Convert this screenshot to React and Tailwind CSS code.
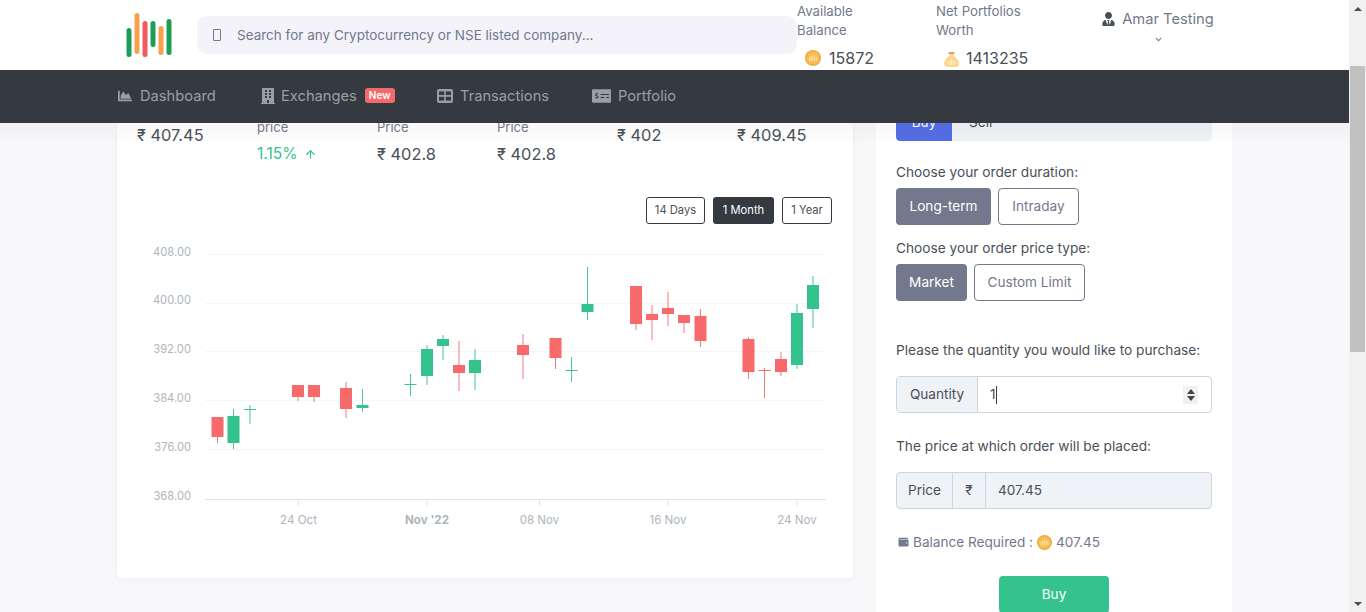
import React from "react";
import { FaChartArea, FaBuilding, FaMoneyCheckAlt, FaUserTie, FaWallet, FaChevronDown } from "react-icons/fa";
import { ArrowUp } from "lucide-react";

function Coin({ s = 16 }) {
  return (
    <svg width={s} height={s} viewBox="0 0 16 16" className="shrink-0">
      <circle cx="8" cy="8" r="8" fill="#f0a93c" />
      <circle cx="8" cy="8" r="6.6" fill="#f6bd55" />
      <path d="M4.5 7v4M6.2 6v5M8 4.5V11M9.8 5.5V11M11.5 7v4" stroke="#fde3a8" strokeWidth="1" />
    </svg>
  );
}
function Bag() {
  return (
    <svg width="15" height="17" viewBox="0 0 15 17" className="shrink-0">
      <path d="M5 3 L10 3 L9.5 5.5 C12.5 8 15 11 15 13.5 C15 16 13 17 11 17 L4 17 C2 17 0 16 0 13.5 C0 11 2.5 8 5.5 5.5 Z" fill="#fdd68e" />
      <rect x="4.5" y="2.4" width="6" height="1.2" fill="#d9654a" />
      <path d="M5 15V11M7.5 15V9M10 15V11" stroke="#fff1cf" strokeWidth="1.1" />
    </svg>
  );
}
function Logo() {
  const bars = [
    [3, 28, 57, "#1f9d55"], [11, 13, 54, "#f9a04b"], [19, 21, 57, "#f0595e"],
    [27, 21, 47, "#1f9d55"], [35, 26, 55, "#f9a04b"], [43, 19, 55, "#1f9d55"],
  ];
  return (
    <svg width="46" height="46" viewBox="0 0 46 46" className="shrink-0">
      {bars.map(([x, y1, y2, c], i) => (
        <line key={i} x1={x} x2={x} y1={y1 - 13 + 2.5} y2={y2 - 13 - 2.5} stroke={c} strokeWidth="5" strokeLinecap="round" />
      ))}
    </svg>
  );
}
function TableIcon() {
  return (
    <svg width="16" height="14" viewBox="0 0 16 14" className="shrink-0">
      <rect width="16" height="14" rx="2" fill="currentColor" />
      <rect x="2" y="2.4" width="5.2" height="3.6" fill="#343a40" />
      <rect x="8.8" y="2.4" width="5.2" height="3.6" fill="#343a40" />
      <rect x="2" y="7.8" width="5.2" height="3.8" fill="#343a40" />
      <rect x="8.8" y="7.8" width="5.2" height="3.8" fill="#343a40" />
    </svg>
  );
}

const G = "#34c38f";
const R = "#f8696b";
// x centre, wick top, wick bottom, body top, body bottom, colour
const candles = [
  [217.5, 417, 443, 417, 437, R],
  [233.5, 409, 449, 416, 443, G],
  [250, 405, 424, 409, 410, G],
  [298, 385, 401, 385, 397, R],
  [314, 385, 402, 385, 397, R],
  [346, 382, 418, 388, 409, R],
  [362.5, 389, 412, 405, 408, G],
  [410.5, 374, 396, 384, 385, G],
  [427, 345, 385, 349, 376, G],
  [443, 335, 360, 339, 346, G],
  [459, 341, 391, 365, 373, R],
  [475, 349, 390, 360, 373, G],
  [523, 334, 379, 345, 355, R],
  [555.5, 338, 369, 338, 358, R],
  [571.5, 357, 382, 370, 371, G],
  [587.5, 267, 320, 304, 312, G],
  [636, 286, 330, 286, 324, R],
  [652, 305, 340, 314, 320, R],
  [668, 292, 326, 308, 314, R],
  [684, 315, 333, 315, 323, R],
  [700.5, 309, 347, 316, 341, R],
  [748.5, 337, 379, 339, 372, R],
  [764.5, 368, 398, 370, 371, R],
  [781, 352, 376, 359, 372, R],
  [797, 304, 369, 313, 365, G],
  [813, 276, 328, 285, 309, G],
];

function Chart() {
  const yLabels = [["408.00", 254, 2], ["400.00", 303, 1], ["392.00", 351, 2], ["384.00", 400, 2], ["376.00", 449, 2], ["368.00", 499, 1]];
  const xLabels = [["24 Oct", 298.5, 400], ["Nov '22", 427, 700], ["08 Nov", 539.5, 400], ["16 Nov", 668, 400], ["24 Nov", 797, 400]];
  const ox = 117, oy = 224;
  return (
    <svg width="736" height="300" viewBox={`${ox} ${oy} 736 300`} className="block">
      {yLabels.map(([t, y, d]) => (
        <g key={t}>
          {y !== 499 && <line x1="205" x2="826" y1={y + 0.5} y2={y + 0.5} stroke="#f6f6f8" />}
          <text x="191" y={y + d} textAnchor="end" fontSize="11.2" fill="#adb5bd" fontFamily="Inter, sans-serif">{t}</text>
        </g>
      ))}
      <line x1="205" x2="826" y1="499.5" y2="499.5" stroke="#e3e3e6" />
      {xLabels.map(([t, x, w]) => (
        <g key={t}>
          <line x1={x} x2={x} y1="500" y2="506" stroke="#e3e3e6" />
          <text x={x} y="524" textAnchor="middle" fontSize="11.6" fontWeight={w} fill="#adb5bd" fontFamily="Inter, sans-serif">{t}</text>
        </g>
      ))}
      {candles.map(([x, wt, wb, bt, bb, c], i) => (
        <g key={i}>
          <line x1={x} x2={x} y1={wt} y2={wb} stroke={c} strokeWidth="1" opacity="0.9" />
          <rect x={x - 6} y={bt} width="12" height={Math.max(bb - bt, 1)} fill={c} />
        </g>
      ))}
    </svg>
  );
}

function Stat({ children, className = "" }) {
  return <div className={"w-[120px] shrink-0 " + className}>{children}</div>;
}

export default function App() {
  return (
    <div className="h-[612px] w-[1366px] flex overflow-hidden bg-[#f8f8fb] text-[#495057]" style={{ fontFamily: "Inter, 'Open Sans', sans-serif" }}>
      <div className="w-[1349px] h-full flex flex-col relative">
        {/* top header */}
        <header className="h-[70px] bg-white flex shrink-0 z-10">
          <div className="w-[197px] shrink-0 pl-[126px] pt-[13px]"><Logo /></div>
          <div className="w-[600px] h-[38px] mt-[16px] bg-[#f3f3f9] rounded-[10px] flex items-center pl-[16px] shrink-0">
            <span className="w-[8px] h-[12px] border border-[#74788d] rounded-[1px]" />
            <span className="ml-[16px] text-[13.5px] text-[#74788d]">Search for any Cryptocurrency or NSE listed company...</span>
          </div>
          <div className="w-[139px] shrink-0 pt-[2px]">
            <div className="text-[13.2px] leading-[19px] text-[#74788d] w-[90px]">Available Balance</div>
            <div className="flex items-center mt-[8px] ml-[8px] gap-[8px]"><Coin /><span className="text-[16px] leading-[20px] text-[#495057]">15872</span></div>
          </div>
          <div className="w-[166px] shrink-0 pt-[2px]">
            <div className="text-[13.2px] leading-[19px] text-[#74788d] w-[100px]">Net Portfolios Worth</div>
            <div className="flex items-center mt-[8px] ml-[8px] gap-[7px]"><Bag /><span className="text-[16px] leading-[20px] text-[#495057]">1413235</span></div>
          </div>
          <div className="pt-[9px] flex flex-col items-center w-[112px]">
            <div className="flex items-center gap-[7px]"><FaUserTie className="w-[13px] h-[14px] text-[#495057]" /><span className="text-[14.7px] leading-[20px] text-[#74788d]">Amar Testing</span></div>
            <FaChevronDown className="w-[7px] h-[7px] mt-[7px] text-[#74788d]" />
          </div>
        </header>
        {/* nav */}
        <nav className="h-[53px] bg-[#343a40] flex items-center pl-[117px] pb-[1px] shrink-0 z-10 text-[#9a9fa5] text-[14.7px]">
          <a className="flex items-center gap-[7px] w-[144px]"><FaChartArea className="w-[16px] h-[14px]" />Dashboard</a>
          <a className="flex items-center gap-[6px] w-[176px]"><FaBuilding className="w-[14px] h-[16px]" />Exchanges<span className="ml-[2px] bg-[#f46a6a] text-white text-[10px] font-semibold rounded-[3px] px-[4px] leading-[15px]">New</span></a>
          <a className="flex items-center gap-[7px] w-[155px]"><TableIcon />Transactions</a>
          <a className="flex items-center gap-[7px]"><FaMoneyCheckAlt className="w-[19px] h-[16px]" />Portfolio</a>
        </nav>
        {/* scrolled content */}
        <div className="flex-1 overflow-hidden flex pl-[117px] gap-[23px] relative">
          <div className="absolute top-0 left-0 right-0 h-[24px] bg-gradient-to-b from-black/[0.03] to-transparent z-[1]" />
          <div className="w-[736px] shrink-0 h-[455px] bg-white rounded-[4px] shadow-[0_1px_6px_rgba(18,38,63,0.05)]">
            <div className="flex pl-[20px] text-[16.4px] h-[74px]">
              <Stat className="pt-[1px]"><div className="leading-[22px]">₹ 407.45</div></Stat>
              <Stat><div className="text-[13px] leading-[8px] text-[#74788d]">price</div><div className="mt-[12px] text-[#34c38f] leading-[22px] flex items-center gap-[6px]"><span className="text-[15.6px]">1.15%</span><ArrowUp className="w-[13px] h-[13px]" strokeWidth={2} /></div></Stat>
              <Stat><div className="text-[13px] leading-[8px] text-[#74788d]">Price</div><div className="mt-[12px] leading-[22px]">₹ 402.8</div></Stat>
              <Stat><div className="text-[13px] leading-[8px] text-[#74788d]">Price</div><div className="mt-[12px] leading-[22px]">₹ 402.8</div></Stat>
              <Stat className="pt-[1px]"><div className="leading-[22px]">₹ 402</div></Stat>
              <Stat className="pt-[1px]"><div className="leading-[22px]">₹ 409.45</div></Stat>
            </div>
            <div className="flex justify-end gap-[8px] pr-[21px] text-[11.2px] h-[27px]">
              <button className="h-[27px] w-[59px] border border-[#343a40] rounded-[3px] text-[#495057]">14 Days</button>
              <button className="h-[27px] w-[61px] bg-[#343a40] rounded-[3px] text-white">1 Month</button>
              <button className="h-[27px] w-[50px] border border-[#343a40] rounded-[3px] text-[#495057]">1 Year</button>
            </div>
            <Chart />
          </div>
          <div className="w-[356px] shrink-0 h-[520px] bg-white px-[20px]">
            <div className="h-[18px] bg-[#eff2f7] rounded-b-[4px] flex overflow-hidden text-[13.6px]">
              <div className="w-[56px] bg-[#556ee6] text-white flex justify-center items-end rounded-bl-[4px]"><span className="leading-[20px] translate-y-[-9px]">Buy</span></div>
              <div className="ml-[17px] text-[#495057] flex items-end"><span className="leading-[20px] translate-y-[-9px]">Sell</span></div>
            </div>
            <div className="mt-[21px] text-[13.7px] leading-[20px] text-[#495057]">Choose your order duration:</div>
            <div className="flex gap-[7px] mt-[6px]">
              <button className="h-[37px] w-[95px] bg-[#74788d] rounded-[4px] text-white text-[13.6px]">Long-term</button>
              <button className="h-[37px] w-[81px] border border-[#74788d] rounded-[4px] text-[#74788d] text-[13.6px]">Intraday</button>
            </div>
            <div className="mt-[13px] text-[13.7px] leading-[20px] text-[#495057]">Choose your order price type:</div>
            <div className="flex gap-[7px] mt-[6px]">
              <button className="h-[37px] w-[71px] bg-[#74788d] rounded-[4px] text-white text-[13.6px]">Market</button>
              <button className="h-[37px] w-[111px] border border-[#74788d] rounded-[4px] text-[#74788d] text-[13.6px]">Custom Limit</button>
            </div>
            <div className="mt-[39px] text-[13.7px] leading-[20px] text-[#495057]">Please the quantity you would like to purchase:</div>
            <div className="flex h-[37px] mt-[16px] border border-[#ced4da] rounded-[4px] text-[13.6px] overflow-hidden">
              <div className="w-[81px] bg-[#eff2f7] border-r border-[#ced4da] flex items-center justify-center text-[#495057]">Quantity</div>
              <div className="flex-1 flex items-center pl-[12px] relative"><span>1</span><span className="w-px h-[18px] bg-[#343a40]" />
                <div className="absolute right-[13px] top-[9px] w-[15px] h-[18px] bg-[#f1f1f1] flex flex-col items-center justify-center gap-[2px]">
                  <span className="w-0 h-0 border-x-[4px] border-x-transparent border-b-[5px] border-b-[#444]" />
                  <span className="w-0 h-0 border-x-[4px] border-x-transparent border-t-[5px] border-t-[#444]" />
                </div>
              </div>
            </div>
            <div className="mt-[23px] text-[13.7px] leading-[20px] text-[#495057]">The price at which order will be placed:</div>
            <div className="flex h-[37px] mt-[16px] border border-[#ced4da] rounded-[4px] text-[13.6px] overflow-hidden bg-[#eff2f7]">
              <div className="w-[56px] border-r border-[#ced4da] flex items-center justify-center">Price</div>
              <div className="w-[33px] border-r border-[#ced4da] flex items-center justify-center">₹</div>
              <div className="pl-[12px] flex items-center">407.45</div>
            </div>
            <div className="mt-[23px] flex items-center text-[13.6px] leading-[20px] text-[#74788d]">
              <FaWallet className="w-[11px] h-[10px] ml-[2px] mr-[4px]" />Balance Required :<span className="mx-[4px]"><Coin s={15} /></span>407.45
            </div>
            <div className="flex justify-center mt-[24px]">
              <button className="w-[110px] h-[37px] bg-[#34c38f] rounded-[4px] text-white text-[13.6px]">Buy</button>
            </div>
          </div>
        </div>
      </div>
      {/* scrollbar */}
      <div className="w-[17px] h-full bg-[#f1f1f1] flex flex-col items-center shrink-0">
        <div className="h-[17px] flex items-center justify-center"><span className="w-0 h-0 border-x-[4px] border-x-transparent border-b-[4px] border-b-[#505050]" /></div>
        <div className="w-[15px] h-[286px] mt-[49px] bg-[#c1c1c1]" />
        <div className="flex-1" />
        <div className="h-[17px] flex items-center justify-center"><span className="w-0 h-0 border-x-[4px] border-x-transparent border-t-[4px] border-t-[#505050]" /></div>
      </div>
    </div>
  );
}
